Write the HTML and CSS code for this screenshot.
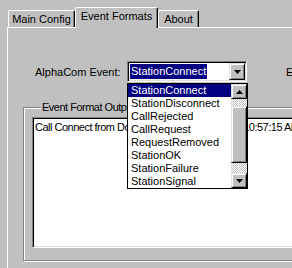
FILE: index.html
```html
<!DOCTYPE html>
<html>

<head>
    <title>AlphaCom Settings</title>
    <link rel="stylesheet" href="styles.css">
</head>

<body>
    <div class="window">
        <div class="tabs">
            <div class="tab tab-main">Main Config</div>
            <div class="tab tab-active">Event Formats</div>
            <div class="tab tab-about">About</div>
        </div>

        <div class="panel">
            <div class="event-row">
                <label class="field-label">AlphaCom Event:</label>

                <div class="combo">
                    <div class="combo-field"><span class="combo-value">StationConnect</span></div>
                    <div class="combo-button">
                        <svg width="7" height="4" viewBox="0 0 7 4"><polygon points="0,0 7,0 3.5,4" fill="#000"/></svg>
                    </div>

                    <div class="combo-list">
                        <ul class="list-items">
                            <li class="selected">StationConnect</li>
                            <li>StationDisconnect</li>
                            <li>CallRejected</li>
                            <li>CallRequest</li>
                            <li>RequestRemoved</li>
                            <li>StationOK</li>
                            <li>StationFailure</li>
                            <li>StationSignal</li>
                        </ul>
                        <div class="scrollbar">
                            <div class="scroll-btn">
                                <svg width="7" height="4" viewBox="0 0 7 4"><polygon points="3.5,0 7,4 0,4" fill="#000"/></svg>
                            </div>
                            <div class="scroll-track"></div>
                            <div class="scroll-thumb"></div>
                            <div class="scroll-track scroll-track-low"></div>
                            <div class="scroll-btn">
                                <svg width="7" height="4" viewBox="0 0 7 4"><polygon points="0,0 7,0 3.5,4" fill="#000"/></svg>
                            </div>
                        </div>
                    </div>
                </div>

                <label class="field-label field-extra">Event Name:</label>
            </div>

            <fieldset class="group">
                <legend>Event Format Output</legend>
                <div class="output">Call Connect from Door Station 12 to Master at 10:57:15 AM</div>
            </fieldset>
        </div>
    </div>
</body>

</html>
```

FILE: styles.css
```css
body {
    margin: 0;
    background-color: #c0c0c0;
    font-family: "Liberation Sans", Arial, sans-serif;
    font-size: 11px;
    color: #000;
    overflow: hidden;
}

.window {
    width: 292px;
    height: 268px;
    overflow: hidden;
}

/* tab strip */
.tabs {
    display: flex;
    align-items: flex-end;
    height: 27px;
    padding-left: 8px;
}

.tab {
    box-sizing: border-box;
    height: 17px;
    border: 1px solid;
    border-color: #fff #000 transparent #fff;
    border-bottom: none;
    border-radius: 2px 2px 0 0;
    box-shadow: inset -1px 0 #808080;
    text-align: center;
    line-height: 16px;
}

.tab-main {
    width: 67px;
}

.tab-active {
    position: relative;
    z-index: 1;
    width: 83px;
    height: 21px;
    margin-bottom: -1px;
    background: #c0c0c0;
    line-height: 16px;
}

.tab-about {
    width: 41px;
}

/* page */
.panel {
    width: 400px;
    height: 260px;
    margin-left: 7px;
    border-top: 1px solid #fff;
    border-left: 1px solid #fff;
}

.event-row {
    display: flex;
    align-items: center;
    margin-top: 33px;
    padding-left: 27px;
    height: 21px;
}

.field-label {
    width: 92px;
    padding-top: 1px;
}

.field-extra {
    width: auto;
    margin-left: 39px;
    white-space: nowrap;
}

/* combo box */
.combo {
    position: relative;
    display: flex;
    box-sizing: border-box;
    width: 120px;
    height: 21px;
    border: 1px solid;
    border-color: #808080 #fff #fff #808080;
    box-shadow: inset 1px 1px #000, inset -1px -1px #dfdfdf;
    background: #fff;
    padding: 1px;
}

.combo-field {
    flex: 1;
    display: flex;
    align-items: center;
    padding-left: 1px;
}

.combo-value {
    background: #000080;
    color: #fff;
    line-height: 15px;
    padding: 0 1px;
}

.combo-button,
.scroll-btn {
    box-sizing: border-box;
    display: flex;
    align-items: center;
    justify-content: center;
    border: 1px solid;
    border-color: #dfdfdf #000 #000 #dfdfdf;
    box-shadow: inset 1px 1px #fff, inset -1px -1px #808080;
    background: #c0c0c0;
}

.combo-button {
    width: 16px;
    height: 17px;
}

/* dropped list */
.combo-list {
    position: absolute;
    top: 21px;
    left: -1px;
    z-index: 2;
    display: flex;
    width: 121px;
    box-sizing: border-box;
    border: 1px solid #000;
    background: #fff;
}

.list-items {
    flex: 1;
    margin: 0;
    padding: 0;
    list-style: none;
}

.list-items li {
    height: 13px;
    line-height: 13px;
    padding-left: 3px;
    white-space: nowrap;
}

.list-items li.selected {
    background: #000080;
    color: #fff;
}

.scrollbar {
    display: flex;
    flex-direction: column;
    width: 16px;
}

.scroll-btn {
    height: 15px;
}

.scroll-track {
    height: 7px;
    background: repeating-conic-gradient(#fff 0 25%, #c0c0c0 0 50%) 0 0 / 2px 2px;
}

.scroll-track-low {
    height: 10px;
}

.scroll-thumb {
    box-sizing: border-box;
    height: 57px;
    border: 1px solid;
    border-color: #dfdfdf #000 #000 #dfdfdf;
    box-shadow: inset 1px 1px #fff, inset -1px -1px #808080;
    background: #c0c0c0;
}

/* group box */
.group {
    margin: 19px 0 0 15px;
    padding: 3px 0 12px 8px;
    border: 1px solid #808080;
    box-shadow: inset 1px 1px #fff, 1px 1px #fff;
    min-width: 0;
    width: 360px;
}

.group legend {
    padding: 0 1px;
    margin-left: 9px;
    background: #c0c0c0;
    line-height: 13px;
    letter-spacing: -0.5px;
}

.output {
    box-sizing: border-box;
    height: 131px;
    border: 1px solid;
    border-color: #808080 #fff #fff #808080;
    box-shadow: inset 1px 1px #000, inset -1px -1px #dfdfdf;
    background: #fff;
    padding: 3px 2px;
    white-space: nowrap;
    letter-spacing: -0.5px;
}
```
